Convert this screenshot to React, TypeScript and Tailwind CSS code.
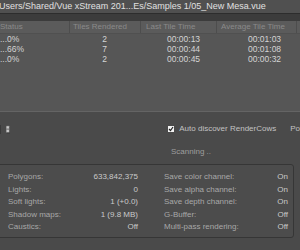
import React from 'react';

const jobs = [
  { status: '...0%', tiles: '2', last: '00:00:13', avg: '00:01:03' },
  { status: '...66%', tiles: '7', last: '00:00:44', avg: '00:01:08' },
  { status: '...0%', tiles: '2', last: '00:00:45', avg: '00:00:32' },
];

const leftStats = [
  ['Polygons:', '633,842,375'],
  ['Lights:', '0'],
  ['Soft lights:', '1 (+0.0)'],
  ['Shadow maps:', '1 (9.8 MB)'],
  ['Caustics:', 'Off'],
];

const rightStats = [
  ['Save color channel:', 'On'],
  ['Save alpha channel:', 'On'],
  ['Save depth channel:', 'On'],
  ['G-Buffer:', 'Off'],
  ['Multi-pass rendering:', 'Off'],
];

function StatRows({ rows }: { rows: string[][] }) {
  return (
    <div className="flex flex-col">
      {rows.map(([label, value]) => (
        <div key={label} className="flex h-[12.5px] items-center justify-between">
          <span className="text-[#a8a8a8]">{label}</span>
          <span className="text-[#cacaca]">{value}</span>
        </div>
      ))}
    </div>
  );
}

export default function App() {
  return (
    <div
      className="w-[300px] h-[250px] overflow-hidden bg-[#4a4a4a] flex flex-col text-[8px]"
      style={{ fontFamily: '"Liberation Sans", Arial, sans-serif' }}
    >
      {/* Path bar */}
      <div className="h-[13px] shrink-0 bg-[#505050] text-[#e0e0e0] text-[9px] leading-[13px] whitespace-nowrap -ml-[1px]">
        Users/Shared/Vue xStream 201...Es/Samples 1/05_New Mesa.vue
      </div>
      <div className="h-[8px] shrink-0 bg-[#3c3c3c] border-t border-[#2d2d2d]" />

      {/* Job list */}
      <div className="h-[91px] shrink-0 bg-[#565656] border-b border-[#646464] flex flex-col">
        <div className="h-[13px] flex bg-[#5b5b5b] text-[#8a8a8a] leading-[12px] border-b border-[#505050]">
          <div className="w-[69px]">Status</div>
          <div className="w-[71px] pl-[3px] border-l border-[#4d4d4d]">Tiles Rendered</div>
          <div className="w-[76px] pl-[5px] border-l border-[#4d4d4d]">Last Tile Time</div>
          <div className="w-[80px] pl-[4px] border-l border-[#4d4d4d]">Average Tile Time</div>
          <div className="flex-1 border-l border-[#4d4d4d]" />
        </div>
        {jobs.map((job, i) => (
          <div key={i} className="h-[10px] flex items-center text-[#d4d4d4] text-[8.5px] pt-[1px]">
            <div className="w-[69px]">{job.status}</div>
            <div className="w-[71px] text-center">{job.tiles}</div>
            <div className="w-[76px] pl-[27px]">{job.last}</div>
            <div className="w-[80px] pl-[32px]">{job.avg}</div>
          </div>
        ))}
      </div>

      {/* Controls */}
      <div className="mt-[10px] h-[14px] flex items-center">
        <div className="w-[2px] h-[9px] bg-[#3a3a3a]" />
        <svg width="7" height="13" viewBox="0 0 7 13" className="ml-[5px]">
          <rect x="0" y="0" width="6" height="12" rx="1" fill="#7a7a7a" />
          <rect x="1" y="1" width="4" height="4" rx="0.5" fill="#c8c8c8" />
          <rect x="1" y="7" width="4" height="4" rx="0.5" fill="#c8c8c8" />
          <rect x="1" y="12" width="6" height="1" fill="#333333" />
        </svg>
        <div className="ml-[158px] w-[6px] h-[6px] bg-[#f2f2f2] flex items-center justify-center">
          <svg width="6" height="6" viewBox="0 0 6 6">
            <path d="M1 3 L2.5 4.5 L5 1" stroke="#222" strokeWidth="1.2" fill="none" />
          </svg>
        </div>
        <span className="ml-[5px] text-[#c2c2c2] whitespace-nowrap">Auto discover RenderCows</span>
        <span className="ml-[14px] text-[#c2c2c2]">Po</span>
      </div>
      <div className="mt-[11px] pl-[171px] text-[#9e9e9e] leading-[10px]">Scanning ..</div>

      {/* Stats */}
      <div className="mt-[7px] -ml-[4px] w-[298px] h-[74px] shrink-0 rounded-[3px] border border-[#363636] bg-[#4c4c4c] pt-[6px] pl-[11px] pr-[7px] grid grid-cols-[130px_124px] gap-x-[26px]">
        <StatRows rows={leftStats} />
        <StatRows rows={rightStats} />
      </div>
    </div>
  );
}
